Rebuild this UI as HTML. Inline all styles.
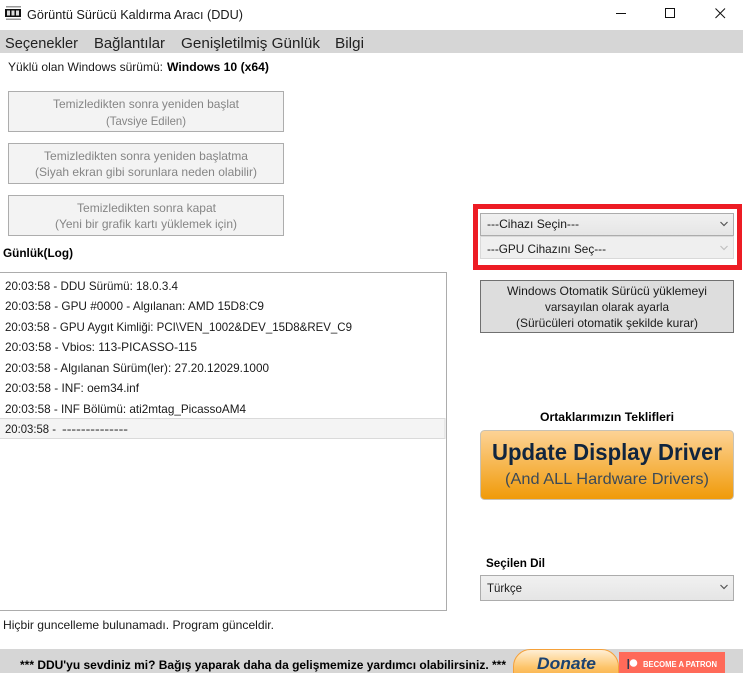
<!DOCTYPE html>
<html lang="tr"><head><meta charset="utf-8"><title>Görüntü Sürücü Kaldırma Aracı (DDU)</title>
<style>
html,body{margin:0;padding:0;background:#fff;width:743px;height:673px;overflow:hidden}
svg{display:block}
text{font-family:"Liberation Sans",sans-serif;font-size:12px;fill:#1a1a1a}
.b{font-weight:bold;fill:#000}
.d{fill:#858585}
.m{font-size:14.5px;fill:#222}
</style></head><body>
<svg width="743" height="673" viewBox="0 0 743 673" xmlns="http://www.w3.org/2000/svg">
<defs>
<linearGradient id="c" x1="0" y1="0" x2="0" y2="1"><stop offset="0" stop-color="#f1f1f1"/><stop offset="1" stop-color="#e5e5e5"/></linearGradient>
<linearGradient id="o" x1="0" y1="0" x2="0" y2="1"><stop offset="0" stop-color="#fdd396"/><stop offset="1" stop-color="#f09a08"/></linearGradient>
<linearGradient id="p" x1="0" y1="0" x2="0" y2="1"><stop offset="0" stop-color="#fff0d8"/><stop offset=".45" stop-color="#fdc469"/><stop offset="1" stop-color="#f59a1e"/></linearGradient>
</defs>
<rect width="743" height="673" fill="#fff"/>

<!-- title bar -->
<g>
<rect x="6" y="6" width="15" height="1.5" fill="#999"/>
<rect x="5" y="9" width="16" height="8" fill="#111"/>
<rect x="7" y="10.5" width="3" height="5" fill="#ddd"/><rect x="11.5" y="10.5" width="3" height="5" fill="#ddd"/><rect x="16" y="10.5" width="3" height="5" fill="#ddd"/>
<rect x="6" y="18.5" width="15" height="1.5" fill="#999"/>
</g>
<text x="27" y="19" style="font-size:13px" textLength="216" lengthAdjust="spacingAndGlyphs">Görüntü Sürücü Kaldırma Aracı (DDU)</text>
<path d="M616 13.5H626" stroke="#111" stroke-width="1"/>
<rect x="665.5" y="8.5" width="9" height="9" fill="none" stroke="#111" stroke-width="1"/>
<path d="M715.5 8.5L725 18M725 8.5L715.5 18" stroke="#111" stroke-width="1" fill="none"/>

<!-- menu -->
<rect x="0" y="30" width="743" height="23" fill="#d6d6d6"/>
<text class="m" x="5" y="48" textLength="73" lengthAdjust="spacingAndGlyphs">Seçenekler</text>
<text class="m" x="94" y="48" textLength="71" lengthAdjust="spacingAndGlyphs">Bağlantılar</text>
<text class="m" x="181" y="48" textLength="139" lengthAdjust="spacingAndGlyphs">Genişletilmiş Günlük</text>
<text class="m" x="335" y="48" textLength="29" lengthAdjust="spacingAndGlyphs">Bilgi</text>

<text x="8" y="71" textLength="155" lengthAdjust="spacingAndGlyphs">Yüklü olan Windows sürümü:</text>
<text class="b" x="167" y="71" textLength="102" lengthAdjust="spacingAndGlyphs">Windows 10 (x64)</text>

<!-- disabled buttons -->
<rect x="8.5" y="91.5" width="275" height="40" fill="#f3f3f3" stroke="#adadad"/>
<text class="d" x="53" y="108" textLength="186" lengthAdjust="spacingAndGlyphs">Temizledikten sonra yeniden başlat</text>
<text class="d" x="106" y="125" textLength="80" lengthAdjust="spacingAndGlyphs">(Tavsiye Edilen)</text>
<rect x="8.5" y="143.5" width="275" height="40" fill="#f3f3f3" stroke="#adadad"/>
<text class="d" x="44" y="160" textLength="204" lengthAdjust="spacingAndGlyphs">Temizledikten sonra yeniden başlatma</text>
<text class="d" x="35" y="176" textLength="222" lengthAdjust="spacingAndGlyphs">(Siyah ekran gibi sorunlara neden olabilir)</text>
<rect x="8.5" y="195.5" width="275" height="40" fill="#f3f3f3" stroke="#adadad"/>
<text class="d" x="77" y="212" textLength="139" lengthAdjust="spacingAndGlyphs">Temizledikten sonra kapat</text>
<text class="d" x="55" y="228" textLength="182" lengthAdjust="spacingAndGlyphs">(Yeni bir grafik kartı yüklemek için)</text>

<text class="b" x="3" y="257" textLength="70" lengthAdjust="spacingAndGlyphs">Günlük(Log)</text>

<!-- log -->
<rect x="-2" y="272.5" width="448.5" height="338" fill="#fff" stroke="#acacac"/>
<rect x="-2" y="418.5" width="447" height="20" fill="#f4f4f4" stroke="#dadada"/>
<text x="5" y="290" textLength="173" lengthAdjust="spacingAndGlyphs">20:03:58 - DDU Sürümü: 18.0.3.4</text>
<text x="5" y="310" textLength="259" lengthAdjust="spacingAndGlyphs">20:03:58 - GPU #0000 - Algılanan: AMD 15D8:C9</text>
<text x="5" y="331" textLength="347" lengthAdjust="spacingAndGlyphs">20:03:58 - GPU Aygıt Kimliği: PCI\VEN_1002&amp;DEV_15D8&amp;REV_C9</text>
<text x="5" y="351" textLength="192" lengthAdjust="spacingAndGlyphs">20:03:58 - Vbios: 113-PICASSO-115</text>
<text x="5" y="372" textLength="264" lengthAdjust="spacingAndGlyphs">20:03:58 - Algılanan Sürüm(ler): 27.20.12029.1000</text>
<text x="5" y="392" textLength="134" lengthAdjust="spacingAndGlyphs">20:03:58 - INF: oem34.inf</text>
<text x="5" y="413" textLength="241" lengthAdjust="spacingAndGlyphs">20:03:58 - INF Bölümü: ati2mtag_PicassoAM4</text>
<text x="5" y="433" textLength="51" lengthAdjust="spacingAndGlyphs">20:03:58 -</text>
<text x="62" y="433" textLength="66" lengthAdjust="spacingAndGlyphs">--------------</text>

<text x="3" y="629" textLength="271" lengthAdjust="spacingAndGlyphs">Hiçbir guncelleme bulunamadı. Program günceldir.</text>

<!-- red box -->
<rect x="475.5" y="206.5" width="264" height="61" fill="none" stroke="#ed1c24" stroke-width="5"/>
<rect x="480.5" y="213.5" width="253" height="22" fill="url(#c)" stroke="#acacac"/>
<text x="487" y="228" textLength="92" lengthAdjust="spacingAndGlyphs">---Cihazı Seçin---</text>
<path d="M720.5 222L724 225.5L727.5 222" fill="none" stroke="#555" stroke-width="1.2"/>
<rect x="480.5" y="236.5" width="253" height="22" fill="#efefef" stroke="#d9d9d9"/>
<text x="487" y="253" textLength="119" lengthAdjust="spacingAndGlyphs">---GPU Cihazını Seç---</text>
<path d="M720.5 246L724 249.5L727.5 246" fill="none" stroke="#c0c0c0" stroke-width="1.2"/>

<!-- auto button -->
<rect x="480.5" y="280.5" width="253" height="52" fill="#dddddd" stroke="#707070"/>
<text x="507" y="295" textLength="200" lengthAdjust="spacingAndGlyphs">Windows Otomatik Sürücü yüklemeyi</text>
<text x="545" y="311" textLength="124" lengthAdjust="spacingAndGlyphs">varsayılan olarak ayarla</text>
<text x="516" y="327" textLength="182" lengthAdjust="spacingAndGlyphs">(Sürücüleri otomatik şekilde kurar)</text>

<text class="b" x="540" y="421" textLength="134" lengthAdjust="spacingAndGlyphs">Ortaklarımızın Teklifleri</text>

<!-- orange -->
<rect x="480.5" y="430.5" width="253" height="69" rx="4" fill="url(#o)" stroke="#c9c2b4"/>
<text x="492" y="460" style="font-size:23px;font-weight:bold;fill:#10253f" textLength="230" lengthAdjust="spacingAndGlyphs">Update Display Driver</text>
<text x="505" y="484" style="font-size:16px;fill:#3c4a58" textLength="204" lengthAdjust="spacingAndGlyphs">(And ALL Hardware Drivers)</text>

<!-- lang -->
<text class="b" x="486" y="567" textLength="59" lengthAdjust="spacingAndGlyphs">Seçilen Dil</text>
<rect x="480.5" y="575.5" width="253" height="25" fill="url(#c)" stroke="#acacac"/>
<text x="487" y="592" textLength="35" lengthAdjust="spacingAndGlyphs">Türkçe</text>
<path d="M720.5 585L724 588.5L727.5 585" fill="none" stroke="#555" stroke-width="1.2"/>

<!-- footer -->
<rect x="0" y="649" width="743" height="24" fill="#d6d6d6"/>
<text class="b" x="20" y="669" textLength="486" lengthAdjust="spacingAndGlyphs">*** DDU'yu sevdiniz mi? Bağış yaparak daha da gelişmemize yardımcı olabilirsiniz. ***</text>
<rect x="513.5" y="649.5" width="105" height="40" rx="17" fill="url(#p)" stroke="#f5a13a"/>
<text x="537" y="669" style="font-size:17px;font-weight:bold;font-style:italic;fill:#1b4270" textLength="59" lengthAdjust="spacingAndGlyphs">Donate</text>
<rect x="619" y="652" width="106" height="21" fill="#ff6a59"/>
<rect x="627.5" y="659" width="1.5" height="10" fill="#2c3a50"/>
<circle cx="633.5" cy="663" r="3.8" fill="#fff"/>
<text x="643" y="667" style="font-size:8px;font-weight:bold;fill:#fff" textLength="74" lengthAdjust="spacingAndGlyphs">BECOME A PATRON</text>
</svg>
</body></html>
